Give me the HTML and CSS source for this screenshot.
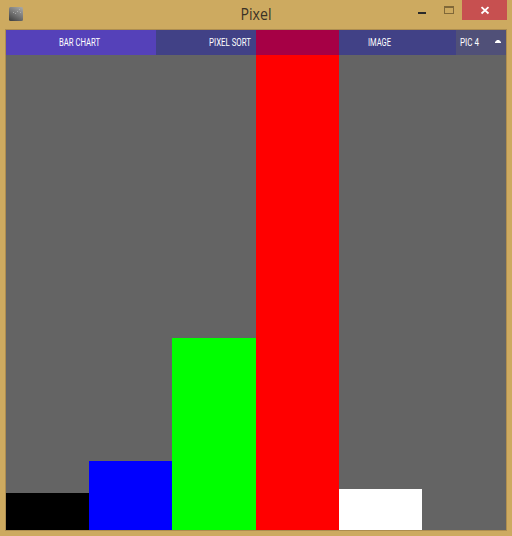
FILE: index.html
```html
<!DOCTYPE html>
<html lang="en">
<head>
<meta charset="utf-8">
<title>Pixel</title>
<link rel="stylesheet" href="styles.css">
</head>
<body>
<div class="window">
  <header class="titlebar">
    <svg class="app-icon" width="14" height="14" viewBox="0 0 14 14">
      <defs><linearGradient id="metal" x1=".8" y1="0" x2=".2" y2="1"><stop offset="0" stop-color="#a4a4a2"/><stop offset=".5" stop-color="#777"/><stop offset="1" stop-color="#444"/></linearGradient></defs>
      <rect width="14" height="14" rx="1.5" fill="url(#metal)"/>
      <path d="M8 4h1v1h-1zM10 2h1v1h-1zM6 6h1v1h-1zM11 5h1v1h-1zM4 5h1v1h-1z" fill="#bbb" opacity=".7"/>
    </svg>
    <h1 class="title">Pixel</h1>
    <div class="controls">
      <svg width="90" height="20" viewBox="0 0 90 20" shape-rendering="crispEdges">
        <rect x="45" width="45" height="20" fill="#c75050"/>
        <rect x="1" y="12" width="8" height="2" fill="#2a2a2a"/>
        <path d="M27 6h10v8h-10z" fill="#806838"/><path d="M28 8h8v5h-8z" fill="#cdaa60"/>
        <path d="M64.500 7.200l7 6.300M71.500 7.200l-7 6.300" stroke="#fff" stroke-width="1.8" shape-rendering="auto"/>
      </svg>
    </div>
  </header>
  <main class="canvas">
    <div class="chart">
      <div class="bar black"></div>
      <div class="bar blue"></div>
      <div class="bar green"></div>
      <div class="bar red"></div>
      <div class="bar white"></div>
    </div>
    <nav class="menu">
      <div class="item active"><svg class="label" width="46" height="13"><text x="1" y="10" textLength="41" lengthAdjust="spacingAndGlyphs">BAR CHART</text></svg></div>
      <div class="item"><svg class="label" width="46" height="13"><text x="1" y="10" textLength="42" lengthAdjust="spacingAndGlyphs">PIXEL SORT</text></svg></div>
      <div class="item"><svg class="label" width="28" height="13"><text x="1" y="10" textLength="23" lengthAdjust="spacingAndGlyphs">IMAGE</text></svg></div>
      <div class="item picker"><svg class="label" width="24" height="13"><text x="1" y="10" textLength="19" lengthAdjust="spacingAndGlyphs">PIC 4</text></svg><svg class="arrow" width="6" height="3" viewBox="0 0 6 3"><path d="M0 3V2L2 0h2l2 2v1z" fill="#fff"/></svg></div>
    </nav>
  </main>
</div>
</body>
</html>
```
FILE: styles.css
```css
* { box-sizing: border-box; }
body { margin: 0; background: #cdaa60; }
.window { width: 512px; height: 536px; padding: 0 5px 5px; background: #cdaa60; }
.titlebar { height: 29px; display: grid; grid-template-columns: 90px 1fr 90px; align-items: start; }
.app-icon { margin: 7px 0 0 4px; }
.title { margin: 4px 0 0; text-align: center; font: 400 15.5px/21px "Open Sans", sans-serif; color: #3a3226; transform: scaleX(.91); }
.controls { height: 20px; }
.controls svg { display: block; }
.canvas { display: grid; width: 502px; height: 502px; border: 1px solid #ad8d50; background: #646464; }
.chart, .menu { grid-area: 1 / 1; }
.chart { display: grid; grid-template-columns: 83px 83px 84px 83px 83px 84px; align-items: end; height: 500px; }
.black { height: 37px; background: #000; }
.blue { height: 69px; background: #00f; }
.green { height: 192px; background: #0f0; }
.red { height: 500px; background: #f00; }
.white { height: 41px; background: #fff; }
.menu { display: grid; grid-template-columns: 150px 150px 150px 50px; height: 25px; z-index: 1; }
.item { display: flex; align-items: center; justify-content: center; background: rgba(0, 0, 198, .35); }
.item.active { background: #5541b9; }
.item.picker { justify-content: space-between; padding: 0 5px 0 3px; background: #505078; }
.label { display: block; overflow: visible; font: 400 10.5px Roboto, sans-serif; fill: #fff; }
.arrow { margin-top: -2px; }
```
